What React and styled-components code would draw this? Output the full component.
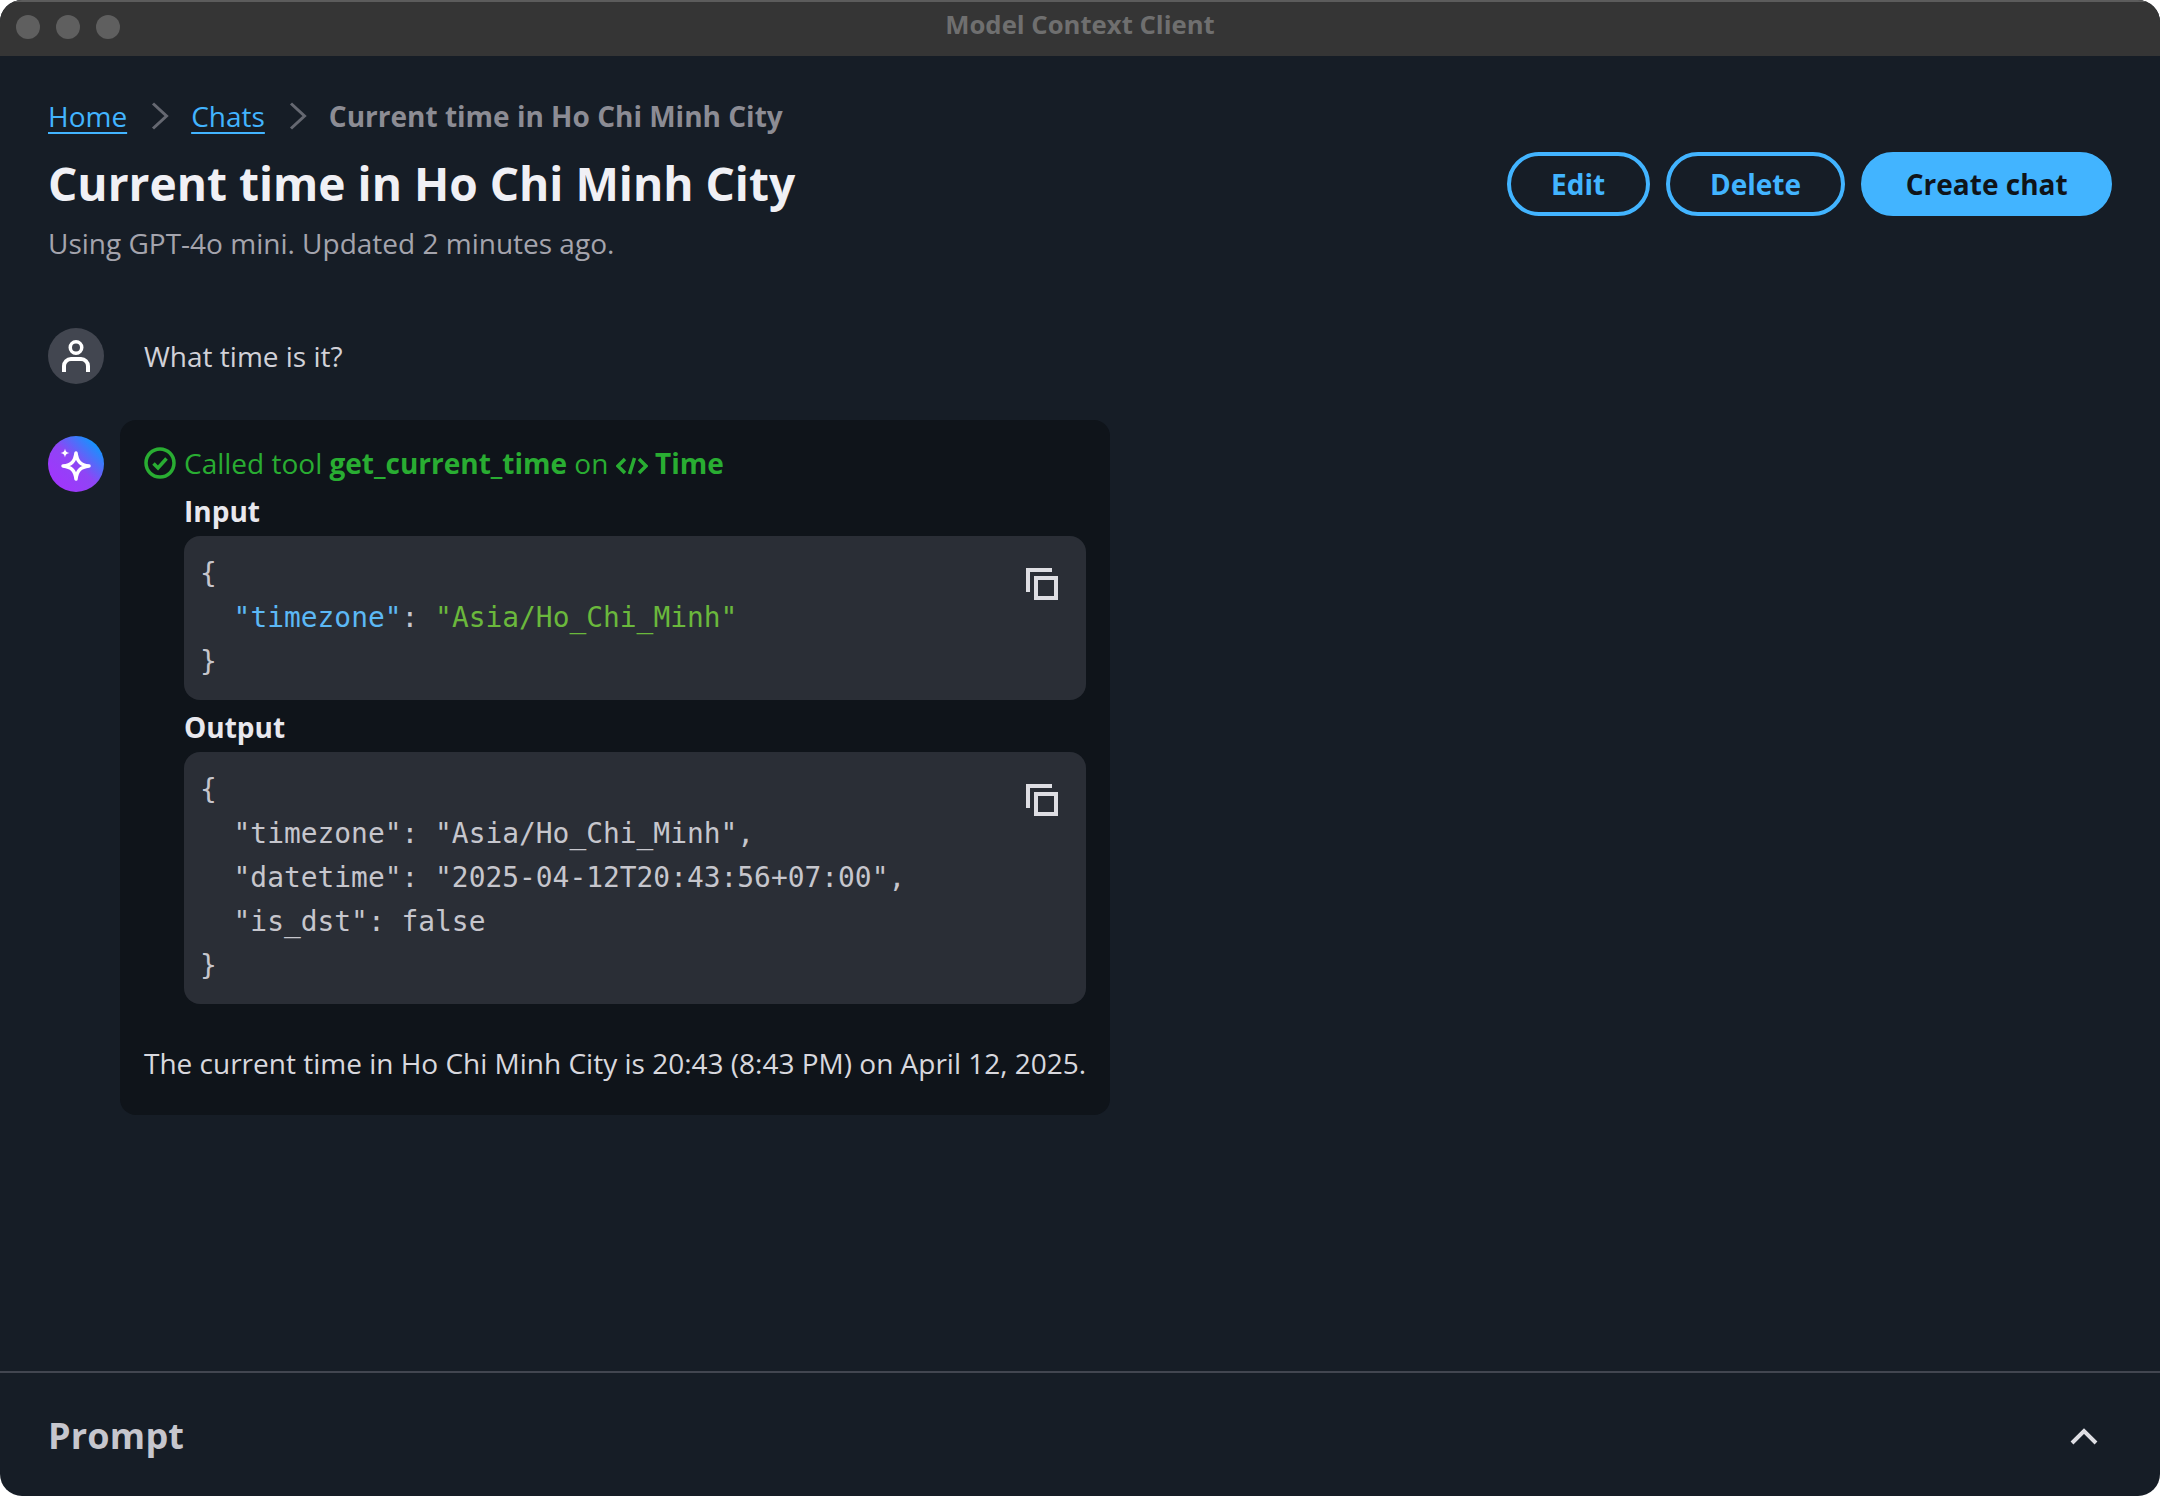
import React from 'react';
import styled, { createGlobalStyle } from 'styled-components';

const GlobalStyle = createGlobalStyle`
  html, body {
    margin: 0;
    background: #fff;
  }
  * {
    box-sizing: border-box;
  }
`;

function CopyIcon() {
  return (
    <CopyButton aria-label="Copy">
      <svg width="32" height="32" viewBox="0 0 32 32" fill="none" stroke="#dedee3" strokeWidth="4">
        <path d="M2 24V2h24" />
        <rect x="10" y="10" width="20" height="20" />
      </svg>
    </CopyButton>
  );
}

function UserIcon() {
  return (
    <svg width="56" height="56" viewBox="0 0 56 56" fill="none" stroke="#fff">
      <circle cx="28" cy="19.500" r="5.750" strokeWidth="3.500" />
      <path d="M16 44v-6a7 7 0 0 1 7-7h10a7 7 0 0 1 7 7v6" strokeWidth="4" />
    </svg>
  );
}

function SparkleIcon() {
  return (
    <svg width="56" height="56" viewBox="0 0 56 56" fill="none">
      <path
        d="M28 17c1 8 4 12 13 13-9 1-12 5-13 13-1-8-4-12-13-13 9-1 12-5 13-13z"
        stroke="#fff"
        strokeWidth="3.500"
        strokeLinejoin="round"
      />
      <path d="M17 12.500c.6 3 1.500 3.900 4.500 4.500-3 .6-3.900 1.500-4.500 4.500-.6-3-1.500-3.900-4.500-4.500 3-.6 3.900-1.500 4.500-4.500z" fill="#fff" />
    </svg>
  );
}

function CrumbArrow() {
  return (
    <CrumbSeparator width="18" height="28" viewBox="0 0 18 28" fill="none" stroke="#656871" strokeWidth="3">
      <path d="M2 1.500L15.500 14 2 26.500" />
    </CrumbSeparator>
  );
}

function App() {
  return (
    <>
      <GlobalStyle />
      <Window>
        <TitleBar>
          <Dots>
            <Dot />
            <Dot />
            <Dot />
          </Dots>
          <WindowTitle>Model Context Client</WindowTitle>
        </TitleBar>

        <Main>
          <Breadcrumbs>
            <CrumbLink href="#">Home</CrumbLink>
            <CrumbArrow />
            <CrumbLink href="#">Chats</CrumbLink>
            <CrumbArrow />
            <CrumbCurrent>Current time in Ho Chi Minh City</CrumbCurrent>
          </Breadcrumbs>

          <Header>
            <PageTitle>Current time in Ho Chi Minh City</PageTitle>
            <Actions>
              <Button>Edit</Button>
              <Button>Delete</Button>
              <Button $primary>Create chat</Button>
            </Actions>
          </Header>
          <Subtitle>Using GPT-4o mini. Updated 2 minutes ago.</Subtitle>

          <UserMessage>
            <Avatar>
              <UserIcon />
            </Avatar>
            <UserText>What time is it?</UserText>
          </UserMessage>

          <AgentMessage>
            <Avatar $agent>
              <SparkleIcon />
            </Avatar>
            <Bubble>
              <ToolStatus>
                <svg width="32" height="32" viewBox="0 0 32 32" fill="none" stroke="#29ad32" strokeWidth="3.500">
                  <circle cx="16" cy="16" r="14" />
                  <path d="M9.500 16.500l4.500 4.500 8.500-9.500" />
                </svg>
                <span>
                  Called tool <strong>get_current_time</strong> on{' '}
                  <svg width="32" height="18" viewBox="0 0 32 18" fill="none" stroke="#29ad32" strokeWidth="3.500">
                    <path d="M9 2L2 9l7 7M23 2l7 7-7 7M18.500 1l-5 16" />
                  </svg>{' '}
                  <strong>Time</strong>
                </span>
              </ToolStatus>

              <ToolSection>
                <SectionLabel>Input</SectionLabel>
                <CodeBox>
                  <CopyIcon />
                  <Code>
                    {'{\n  '}
                    <JsonKey>"timezone"</JsonKey>
                    {': '}
                    <JsonString>"Asia/Ho_Chi_Minh"</JsonString>
                    {'\n}'}
                  </Code>
                </CodeBox>
              </ToolSection>

              <ToolSection $output>
                <SectionLabel>Output</SectionLabel>
                <CodeBox>
                  <CopyIcon />
                  <Code>
                    {`{
  "timezone": "Asia/Ho_Chi_Minh",
  "datetime": "2025-04-12T20:43:56+07:00",
  "is_dst": false
}`}
                  </Code>
                </CodeBox>
              </ToolSection>

              <Answer>The current time in Ho Chi Minh City is 20:43 (8:43 PM) on April 12, 2025.</Answer>
            </Bubble>
          </AgentMessage>
        </Main>

        <Footer>
          <FooterTitle>Prompt</FooterTitle>
          <svg width="32" height="32" viewBox="0 0 32 32" fill="none" stroke="#dedee3" strokeWidth="4">
            <path d="M4 23L16 11l12 12" />
          </svg>
        </Footer>
      </Window>
    </>
  );
}

const Window = styled.div`
  width: 2160px;
  height: 1496px;
  display: flex;
  flex-direction: column;
  overflow: hidden;
  border-radius: 22px;
  background: #161d26;
  color: #dedee3;
  font-family: "Open Sans", "Noto Sans", sans-serif;
  font-size: 28px;
  line-height: 40px;
`;

const TitleBar = styled.div`
  position: relative;
  flex: none;
  height: 56px;
  display: flex;
  align-items: center;
  justify-content: center;
  background: #353535;
  border-top: 2px solid #5c5c5c;
`;

const Dots = styled.div`
  position: absolute;
  left: 16px;
  top: 13px;
  display: flex;
  gap: 16px;
`;

const Dot = styled.span`
  width: 24px;
  height: 24px;
  border-radius: 50%;
  background: #5f5f5f;
`;

const WindowTitle = styled.div`
  margin-top: -8px;
  font-size: 25.700px;
  font-weight: 700;
  color: #6f6f6f;
`;

const Main = styled.main`
  flex: 1;
  padding: 40px 48px 0;
`;

const Breadcrumbs = styled.nav`
  display: flex;
  align-items: center;
  height: 40px;
`;

const CrumbLink = styled.a`
  color: #42b4ff;
  text-decoration: underline;
  text-underline-offset: 5px;
  text-decoration-thickness: 2px;
`;

const CrumbSeparator = styled.svg`
  margin: 0 22px 0 24px;
`;

const CrumbCurrent = styled.span`
  font-weight: 700;
  color: #8c8c94;
`;

const Header = styled.header`
  display: flex;
  align-items: center;
  justify-content: space-between;
  margin-top: 16px;
`;

const PageTitle = styled.h1`
  margin: 0;
  font-size: 46.100px;
  line-height: 64px;
  font-weight: 700;
  color: #f0f0f5;
`;

const Actions = styled.div`
  display: flex;
  gap: 16px;
`;

const Button = styled.button`
  height: 64px;
  padding: 0 40.400px;
  border: 4px solid #42b4ff;
  border-radius: 32px;
  background: ${(p) => (p.$primary ? '#42b4ff' : 'transparent')};
  color: ${(p) => (p.$primary ? '#0f141a' : '#42b4ff')};
  font-family: inherit;
  font-size: 28px;
  font-weight: 700;
`;

const Subtitle = styled.p`
  margin: 7px 0 0;
  color: #a4a4ad;
`;

const UserMessage = styled.div`
  display: flex;
  align-items: center;
  gap: 40px;
  margin-top: 65px;
`;

const Avatar = styled.div`
  flex: none;
  width: 56px;
  height: 56px;
  display: flex;
  align-items: center;
  justify-content: center;
  border-radius: 50%;
  background: ${(p) =>
    p.$agent ? 'linear-gradient(225deg, #00a1ff 8%, #8f45f5 50%, #a730ff 100%)' : '#424650'};
`;

const UserText = styled.div`
  color: #d1d1d8;
`;

const AgentMessage = styled.div`
  display: flex;
  align-items: flex-start;
  gap: 16px;
  margin-top: 36px;

  ${Avatar} {
    margin-top: 16px;
  }
`;

const Bubble = styled.div`
  width: 990px;
  padding: 23px 24px 32px;
  border-radius: 16px;
  background: #0f141a;
`;

const ToolStatus = styled.div`
  display: flex;
  align-items: center;
  gap: 8px;
  color: #29ad32;

  svg {
    flex: none;
  }

  span svg {
    display: inline-block;
    vertical-align: -1px;
  }

  strong {
    font-weight: 700;
  }
`;

const ToolSection = styled.section`
  margin: ${(p) => (p.$output ? '7px' : '8px')} 0 0 40px;
`;

const SectionLabel = styled.div`
  font-weight: 700;
  color: #e8e8ee;
  margin-bottom: 5px;
`;

const CodeBox = styled.div`
  position: relative;
  padding: 16px;
  border-radius: 16px;
  background: #2a2e36;
`;

const CopyButton = styled.div`
  position: absolute;
  top: 32px;
  right: 28px;
  line-height: 0;
`;

const Code = styled.pre`
  margin: 0;
  font-family: "DejaVu Sans Mono", monospace;
  font-size: 27.900px;
  line-height: 44px;
  color: #c6c6cd;
`;

const JsonKey = styled.span`
  color: #5cb8f5;
`;

const JsonString = styled.span`
  color: #6ab83c;
`;

const Answer = styled.p`
  margin: 39px 0 0;
  color: #d8d8de;
  white-space: nowrap;
`;

const Footer = styled.footer`
  flex: none;
  height: 125px;
  display: flex;
  align-items: center;
  justify-content: space-between;
  padding: 2px 60px 0 48px;
  border-top: 2px solid #424650;
`;

const FooterTitle = styled.div`
  font-size: 36px;
  font-weight: 700;
  letter-spacing: 0.200px;
  color: #c6c6cd;
`;

export default App;
